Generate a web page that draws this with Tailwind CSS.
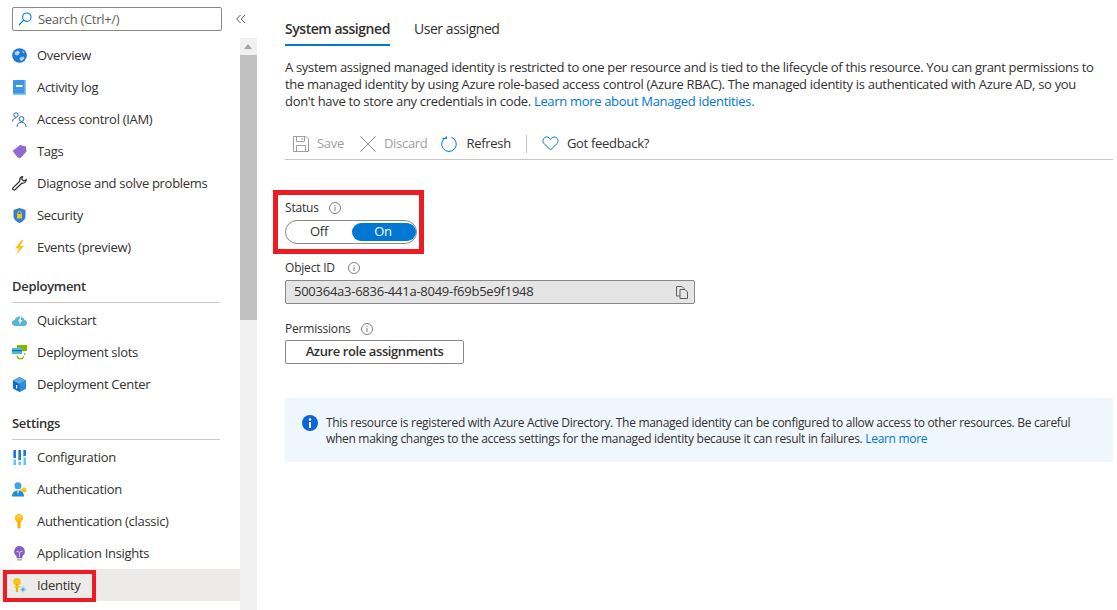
<!DOCTYPE html>
<html lang="en">
<head>
  <meta charset="UTF-8" />
  <title>Identity</title>
  <script src="https://cdn.jsdelivr.net/npm/@tailwindcss/browser@4"></script>
</head>
<body class="bg-white">
  <div class="flex h-[610px] w-[1117px] overflow-hidden font-['Open_Sans',sans-serif] text-[13px] tracking-[-0.3px] text-[#323130]">

    <!-- Sidebar -->
    <div class="relative w-[240px] shrink-0">
      <div class="mx-[12px] mt-[7px] flex h-[24px] w-[210px] items-center gap-[6px] rounded-[2px] border border-[#8a8886] pl-[5px] text-[#605e5c]">
        <svg class="h-[14px] w-[14px]" viewBox="0 0 14 14" fill="none" stroke="#0078d4" stroke-width="1.1"><circle cx="8.800" cy="5.200" r="4.200"/><path d="M5.800 8.200 1 13"/></svg>
        <span class="pt-[2px]">Search (Ctrl+/)</span>
      </div>

      <div class="mt-[8px]">
        <div class="flex h-[32px] items-center gap-[10px] pl-[12px]">
          <svg class="h-[15px] w-[15px]" viewBox="0 0 15 15"><circle cx="7.500" cy="7.500" r="7.300" fill="#1f78d1"/><path d="M2.500 4.500 6 2.500l2 2-2 3-3-.5zM10 2.500l2.500 1.500-1 1.500zM8 9.500l3.500-1 1 2-3 2.500-2-1.500z" fill="#a8d4f5"/></svg>
          <span class="pt-[2px]">Overview</span>
        </div>
        <div class="flex h-[32px] items-center gap-[10px] pl-[12px]">
          <svg class="h-[15px] w-[15px]" viewBox="0 0 15 15"><rect x="1" y="0" width="13" height="15" rx="1" fill="#3b97e8"/><rect x="12.500" y="0" width="1.500" height="15" fill="#8cc6f5"/><rect x="1" y="13.500" width="13" height="1.500" fill="#8cc6f5"/><rect x="4" y="5" width="6.500" height="2" fill="#fff"/></svg>
          <span class="pt-[2px]">Activity log</span>
        </div>
        <div class="flex h-[32px] items-center gap-[10px] pl-[12px]">
          <svg class="h-[15px] w-[15px]" viewBox="0 0 15 15" fill="none" stroke="#2563c9" stroke-width="1"><circle cx="4" cy="3" r="2.200"/><path d="M.6 9.500C.6 7.200 2 6 4.200 6"/><circle cx="9.500" cy="7" r="2.400"/><path d="M5 14.800c0-2.800 2-4.500 4.500-4.500s4.500 1.700 4.500 4.500"/></svg>
          <span class="pt-[2px]">Access control (IAM)</span>
        </div>
        <div class="flex h-[32px] items-center gap-[10px] pl-[12px]">
          <svg class="h-[15px] w-[15px]" viewBox="0 0 15 15"><path d="M.5 7 8 1l6 1.500 .5 5-6.500 7z" fill="#8f6ad0"/><path d="M.5 7 8 14.500 5.500 13z" fill="#5c3d9e"/></svg>
          <span class="pt-[2px]">Tags</span>
        </div>
        <div class="flex h-[32px] items-center gap-[10px] pl-[12px]">
          <svg class="h-[15px] w-[15px]" viewBox="0 0 15 15" fill="none" stroke="#323130" stroke-width="1.200"><path d="M10.500.7C8.500 1 7.500 3 7.800 5.200L1 11.800c-1 1.200.8 3.100 2 2l6.800-6.600c2 .5 4.200-.8 4.500-3.700l-2.500 1.500-2-1.800z"/></svg>
          <span class="pt-[2px]">Diagnose and solve problems</span>
        </div>
        <div class="flex h-[32px] items-center gap-[10px] pl-[12px]">
          <svg class="h-[15px] w-[15px]" viewBox="0 0 15 15"><path d="M7.500 0 13.500 2v6c0 3.500-3 5.800-6 7-3-1.200-6-3.500-6-7V2z" fill="#2f7fd6"/><rect x="5" y="6" width="5" height="4.500" fill="#f2c811"/><path d="M5.800 6V5a1.700 1.700 0 0 1 3.400 0v1" fill="none" stroke="#f2c811"/></svg>
          <span class="pt-[2px]">Security</span>
        </div>
        <div class="flex h-[32px] items-center gap-[10px] pl-[12px]">
          <svg class="h-[15px] w-[15px]" viewBox="0 0 15 15"><path d="M9.500 0 3 8.500h4L4 15l8-9H8l3.500-6z" fill="#f8c41c"/></svg>
          <span class="pt-[2px]">Events (preview)</span>
        </div>
      </div>

      <div class="mx-[12px] mt-[14px] flex h-[26px] w-[208px] items-start border-b border-[#c8c6c4] font-semibold">Deployment</div>
      <div class="mt-[1px]">
        <div class="flex h-[32px] items-center gap-[10px] pl-[12px]">
          <svg class="h-[15px] w-[15px]" viewBox="0 0 15 15"><path d="M3.500 13C1.500 13 0 11.700 0 10s1.200-3 2.800-3C3.300 5 5 3.500 7.500 3.500S12 5 12.300 7C13.800 7 15 8.300 15 10s-1.300 3-3 3z" fill="#59b4d9"/><path d="M8.500 4 6 8.500h2L7 12l3.500-5H8.500l1-3z" fill="#fff"/></svg>
          <span class="pt-[2px]">Quickstart</span>
        </div>
        <div class="flex h-[32px] items-center gap-[10px] pl-[12px]">
          <svg class="h-[15px] w-[15px]" viewBox="0 0 15 15"><rect x="5" y="0" width="10" height="6" fill="#7fba00"/><rect x="0" y="3" width="10" height="6" fill="#59b4d9"/><rect x="0" y="5" width="10" height="1.200" fill="#0072c6"/><path d="M5 10.500a3.500 3.500 0 0 0 6.800 1M13 10a3.500 3.500 0 0 0-1-1.500" fill="none" stroke="#7fba00" stroke-width="1.300"/></svg>
          <span class="pt-[2px]">Deployment slots</span>
        </div>
        <div class="flex h-[32px] items-center gap-[10px] pl-[12px]">
          <svg class="h-[15px] w-[15px]" viewBox="0 0 15 15"><path d="M7.500 0 14 3.500v8L7.500 15 1 11.500v-8z" fill="#0a6fcb"/><path d="M7.500 0 14 3.500 7.500 7 1 3.500z" fill="#5ea9e6"/><path d="M7.500 7 14 3.500v8L7.500 15z" fill="#2f8ae0"/><rect x="4" y="8" width="1.300" height="3.500" fill="#fff"/></svg>
          <span class="pt-[2px]">Deployment Center</span>
        </div>
      </div>

      <div class="mx-[12px] mt-[14px] flex h-[26px] w-[208px] items-start border-b border-[#c8c6c4] font-semibold">Settings</div>
      <div class="mt-[1px]">
        <div class="flex h-[32px] items-center gap-[10px] pl-[12px]">
          <svg class="h-[15px] w-[15px]" viewBox="0 0 15 15"><rect x="1.500" y="0" width="2.500" height="15" fill="#5ec8f5"/><rect x="6.500" y="0" width="2.500" height="15" fill="#5ec8f5"/><rect x="11.500" y="0" width="2.500" height="15" fill="#5ec8f5"/><rect x="1.500" y="0" width="2.500" height="8" fill="#1f78d1"/><rect x="6.500" y="0" width="2.500" height="10" fill="#1f78d1"/><rect x="11.500" y="0" width="2.500" height="6" fill="#1f78d1"/><rect x="1.500" y="8" width="2.500" height="1.500" fill="#fff"/><rect x="6.500" y="10" width="2.500" height="1.500" fill="#fff"/><rect x="11.500" y="6" width="2.500" height="1.500" fill="#fff"/></svg>
          <span class="pt-[2px]">Configuration</span>
        </div>
        <div class="flex h-[32px] items-center gap-[10px] pl-[12px]">
          <svg class="h-[15px] w-[15px]" viewBox="0 0 15 15"><circle cx="6" cy="3.800" r="3.500" fill="#3ba7e0"/><path d="M0 14.500c0-4 2.500-6 6-6s6 2 6 6z" fill="#1f8ed6"/><path d="M5 8.500h2l-1 4z" fill="#d6f0fb"/><circle cx="12" cy="8" r="2.500" fill="#f8c41c"/><rect x="8" y="7.300" width="3" height="1.400" fill="#f8c41c"/></svg>
          <span class="pt-[2px]">Authentication</span>
        </div>
        <div class="flex h-[32px] items-center gap-[10px] pl-[12px]">
          <svg class="h-[15px] w-[15px]" viewBox="0 0 15 15"><circle cx="7" cy="4.200" r="4.200" fill="#fcc419"/><path d="M5.500 7h3v6.500L7 15l-1.500-1.500z" fill="#f5a800"/><rect x="5.500" y="1.800" width="3" height="1.200" fill="#fdeaa0"/></svg>
          <span class="pt-[2px]">Authentication (classic)</span>
        </div>
        <div class="flex h-[32px] items-center gap-[10px] pl-[12px]">
          <svg class="h-[15px] w-[15px]" viewBox="0 0 15 15"><path d="M7.500 0a5.500 5.500 0 0 0-3 10v2h6v-2a5.500 5.500 0 0 0-3-10z" fill="#8661c5"/><rect x="5" y="12.500" width="5" height="2" fill="#b0b0b0"/><path d="M4.500 5.500h2l1 1.500 1-1.500h2M7.500 7v4" fill="none" stroke="#d9c8f0" stroke-width=".9"/></svg>
          <span class="pt-[2px]">Application Insights</span>
        </div>
        <div class="flex h-[32px] items-center gap-[10px] bg-[#edebe9] pl-[12px]">
          <svg class="h-[15px] w-[15px]" viewBox="0 0 15 15"><circle cx="5" cy="3.800" r="3.800" fill="#f8c41c"/><rect x="3.800" y="6" width="2.400" height="8" fill="#f0b400"/><rect x="2.500" y="8" width="6" height="1.500" fill="#f8c41c"/><path d="M11 7.500 15 11.500 11 15 7.500 11.500z" fill="#b5dcf5"/><path d="M11 9.800 12.800 11.500 11 13.200 9.300 11.500z" fill="#3ba7e0"/></svg>
          <span class="pt-[2px]">Identity</span>
        </div>
      </div>

      <!-- annotation round the selected item -->
      <div class="absolute top-[570px] left-[3px] h-[32px] w-[93px] border-[4px] border-[#ed1c24]"></div>
    </div>

    <!-- Scrollbar -->
    <div class="flex w-[17px] shrink-0 flex-col">
      <div class="h-[38px]"></div>
      <div class="flex-1 bg-[#f1f1f1]">
        <div class="h-[17px]"></div>
        <div class="h-[265px] bg-[#c1c1c1]"></div>
      </div>
    </div>

    <!-- Collapse chevrons sit over the sidebar edge -->
    <svg class="absolute top-[14px] left-[236px] h-[10px] w-[10px]" viewBox="0 0 10 10" fill="none" stroke="#605e5c"><path d="M4.500 1 .7 5l3.800 4M9 1 5.200 5 9 9"/></svg>
    <svg class="absolute top-[44px] left-[244px] h-[6px] w-[8px]" viewBox="0 0 8 6"><path d="M4 0 8 5H0z" fill="#a3a3a3"/></svg>

    <!-- Main -->
    <div class="ml-[28px] w-[828px] shrink-0">
      <div class="flex h-[46px] gap-[24px] pt-[18px] text-[14px] tracking-[-0.45px]">
        <div class="h-[28px] border-b-2 border-[#0078d4] font-semibold">System assigned</div>
        <div>User assigned</div>
      </div>
      <p class="mt-[13px] w-[815px] leading-[17px] tracking-[-0.32px]">A system assigned managed identity is restricted to one per resource and is tied to the lifecycle of this resource. You can grant permissions to the managed identity by using Azure role-based access control (Azure RBAC). The managed identity is authenticated with Azure AD, so you don't have to store any credentials in code. <span class="text-[#0078d4]">Learn more about Managed identities.</span></p>

      <div class="mt-[12px] flex h-[38px] items-center border-b border-[#c8c6c4] pt-[6px]">
        <svg class="ml-[8px] h-[16px] w-[16px]" viewBox="0 0 16 16" fill="none" stroke="#a19f9d"><path d="M.5.500h12.500l2.500 2.500v12.500H.5z"/><path d="M3.500.500v5h8v-5M3.500 15.500v-6h9v6M9 2v2"/></svg>
        <span class="ml-[8px] text-[#a19f9d]">Save</span>
        <svg class="ml-[16px] h-[16px] w-[16px]" viewBox="0 0 16 16" fill="none" stroke="#8a8886"><path d="M.5.500 15.500 15.500M15.500.500.5 15.500"/></svg>
        <span class="ml-[8px] text-[#a19f9d]">Discard</span>
        <svg class="ml-[14px] h-[16px] w-[16px]" viewBox="0 0 16 16" fill="none" stroke="#0078d4"><path d="M5.500 1.300a7.300 7.300 0 1 0 5 0"/><path d="M1.500 2.500h4v-2.200" stroke-width="1"/></svg>
        <span class="ml-[9px]">Refresh</span>
        <div class="ml-[15px] h-[18px] w-px bg-[#c8c6c4]"></div>
        <svg class="ml-[15px] h-[15px] w-[17px]" viewBox="0 0 16 15" fill="none" stroke="#0078d4"><path d="M8 14 1.500 7.500C-.5 5.500.5 1 4 1c2 0 3.200 1 4 2.500C8.800 2 10 1 12 1c3.500 0 4.500 4.500 2.500 6.500z"/></svg>
        <span class="ml-[8px]">Got feedback?</span>
      </div>

      <!-- Status -->
      <div class="relative mt-[39px]">
        <div class="flex h-[18px] items-center gap-[10px] text-[12px] tracking-[-0.2px]">
          <span>Status</span>
          <svg class="h-[12px] w-[12px]" viewBox="0 0 12 12" fill="none" stroke="#605e5c" stroke-width=".8"><circle cx="6" cy="6" r="5.500"/><path d="M6 5v4M6 3v1"/></svg>
        </div>
        <div class="mt-[3px] flex h-[24px] w-[132px] items-center rounded-full border border-[#8a8886] py-[2px] pl-[2px]">
          <div class="flex-1 pr-[2px] text-center">Off</div>
          <div class="flex h-[18px] w-[64px] items-center justify-center rounded-full bg-[#0078d4] pr-[2px] text-white">On</div>
        </div>
        <!-- annotation round the status toggle -->
        <div class="absolute -top-[9px] -left-[12px] h-[64px] w-[151px] border-[5px] border-[#ed1c24]"></div>
      </div>

      <!-- Object ID -->
      <div class="mt-[15px] flex h-[18px] items-center gap-[13px] text-[12px] tracking-[-0.2px]">
        <span>Object ID</span>
        <svg class="h-[12px] w-[12px]" viewBox="0 0 12 12" fill="none" stroke="#605e5c" stroke-width=".8"><circle cx="6" cy="6" r="5.500"/><path d="M6 5v4M6 3v1"/></svg>
      </div>
      <div class="mt-[3px] flex h-[24px] w-[410px] items-center justify-between rounded-[2px] border border-[#8a8886] bg-[#e5e5e5] pr-[6px] pl-[8px] tracking-[-0.25px]">
        <span>500364a3-6836-441a-8049-f69b5e9f1948</span>
        <svg class="h-[13px] w-[12px]" viewBox="0 0 12 13" fill="none" stroke="#605e5c"><path d="M.5.500h5.500l2 2v7.500H.5z"/><path d="M4 3.500h5l2.500 2.500v6.500H4z" fill="#e5e5e5"/></svg>
      </div>

      <!-- Permissions -->
      <div class="mt-[16px] flex h-[18px] items-center gap-[10px] text-[12px] tracking-[-0.2px]">
        <span>Permissions</span>
        <svg class="h-[12px] w-[12px]" viewBox="0 0 12 12" fill="none" stroke="#605e5c" stroke-width=".8"><circle cx="6" cy="6" r="5.500"/><path d="M6 5v4M6 3v1"/></svg>
      </div>
      <div class="mt-[2px] flex h-[24px] w-[179px] items-center justify-center rounded-[2px] border border-[#8a8886] font-semibold tracking-[-0.4px]">Azure role assignments</div>

      <!-- Info banner -->
      <div class="mt-[34px] flex h-[64px] gap-[8px] bg-[#eff6fd] pt-[17px] pl-[17px] text-[12px] leading-[16px]">
        <svg class="h-[16px] w-[16px] shrink-0" viewBox="0 0 16 16"><circle cx="8" cy="8" r="8" fill="#0b66d4"/><rect x="7" y="7" width="2" height="6" fill="#fff"/><circle cx="8" cy="4.500" r="1.200" fill="#fff"/></svg>
        <p class="w-[770px]">This resource is registered with Azure Active Directory. The managed identity can be configured to allow access to other resources. Be careful when making changes to the access settings for the managed identity because it can result in failures. <span class="text-[#0078d4]">Learn more</span></p>
      </div>
    </div>
  </div>
</body>
</html>
